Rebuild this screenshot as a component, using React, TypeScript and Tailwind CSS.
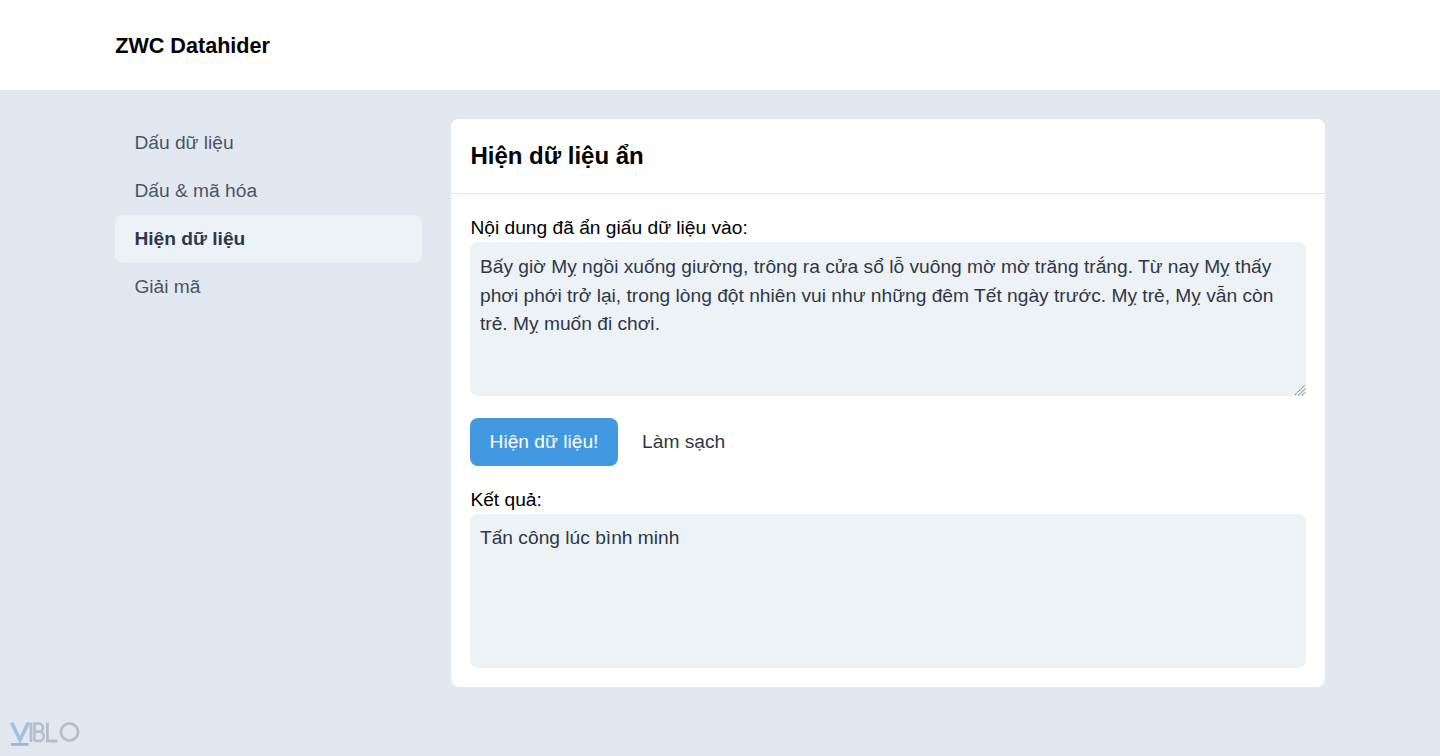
export default function App() {
  const nav = ["Dấu dữ liệu", "Dấu & mã hóa", "Hiện dữ liệu", "Giải mã"];
  const fieldBase =
    "block w-full h-[153.6px] rounded-[8px] bg-[#edf2f7] px-[9.6px] text-[19.2px] leading-[28.8px] text-[#2d3748] outline-none";
  const labelClass = "block h-[28.8px] pt-[1px]";
  return (
    <div className="relative h-[756px] overflow-hidden bg-[#e2e8f0] font-['Liberation_Sans',sans-serif] text-[19.2px] leading-[28.8px] text-black">
      <header className="h-[90px] bg-white">
        <div className="mx-auto flex h-full w-[1209.6px] items-center pt-[2px]">
          <h1 className="text-[21.6px] font-bold">ZWC Datahider</h1>
        </div>
      </header>
      <div className="mx-auto flex w-[1209.6px] items-start gap-[28.8px] pt-[28.8px]">
        <nav className="flex w-[307.2px] flex-col">
          {nav.map((n, i) => (
            <a
              key={n}
              className={
                i === 2
                  ? "h-[48px] rounded-[8px] bg-[#edf2f7] px-[19.2px] pt-[10.6px] font-bold text-[#2d3748]"
                  : "h-[48px] px-[19.2px] pt-[10.6px] text-[#4a5568]"
              }
            >
              {n}
            </a>
          ))}
        </nav>
        <main className="h-[568px] w-[873.6px] rounded-[8px] bg-white">
          <div className="flex h-[75.4px] items-center border-b border-[#e2e8f0] px-[19.2px]">
            <h2 className="text-[24px] font-bold">Hiện dữ liệu ẩn</h2>
          </div>
          <div className="px-[19.2px] pt-[19.2px]">
            <label className={labelClass}>Nội dung đã ẩn giấu dữ liệu vào:</label>
            <div className="relative">
              <textarea
                className={fieldBase + " resize-none pt-[10.6px] pb-[8.6px]"}
                readOnly
                defaultValue="Bấy giờ Mỵ ngồi xuống giường, trông ra cửa sổ lỗ vuông mờ mờ trăng trắng. Từ nay Mỵ thấy phơi phới trở lại, trong lòng đột nhiên vui như những đêm Tết ngày trước. Mỵ trẻ, Mỵ vẫn còn trẻ. Mỵ muốn đi chơi."
              />
              <svg className="absolute bottom-0 right-0" width="12" height="12" viewBox="0 0 12 12" fill="none">
                <path d="M1 11 L11 1 M4.5 11.5 L11.5 4.5 M8 11.5 L11.5 8" stroke="#7f858c" strokeWidth="1.1" strokeDasharray="1.4 0.6" />
                <path d="M2 11.5 L11.5 2 M5.5 11.5 L11.5 5.5" stroke="#ffffff" strokeWidth="0.6" opacity="0.6" />
              </svg>
            </div>
            <div className="mt-[22.2px] flex items-center">
              <button className="h-[48px] rounded-[8px] bg-[#4299e1] px-[19.2px] text-white">Hiện dữ liệu!</button>
              <button className="ml-[5.3px] h-[48px] px-[19.2px] text-[#2d3748]">Làm sạch</button>
            </div>
            <label className={"mt-[19.2px] " + labelClass}>Kết quả:</label>
            <div className={fieldBase + " py-[9.6px]"}>Tấn công lúc bình minh</div>
          </div>
        </main>
      </div>
      <svg className="absolute bottom-[8px] left-[10px]" width="72" height="26" viewBox="0 0 72 26" fill="none">
        <path d="M1.5 0.5 L10 18 L18.5 0.5" stroke="#a3bfe2" strokeWidth="3.6" />
        <rect x="1" y="21" width="17.5" height="2.8" fill="#94b6e0" />
        <rect x="19.6" y="0.5" width="2.8" height="19.5" fill="#b5bfcc" />
        <path d="M24.5 19V1.7h4.5c5.2 0 5.2 8 0 8h-4.5M29 9.7c6.4 0 6.4 9.3 0 9.3h-4.5" stroke="#b5bfcc" strokeWidth="2.7" />
        <path d="M37.4 0.5v18.5h10" stroke="#b5bfcc" strokeWidth="2.8" />
        <circle cx="59.5" cy="10" r="8.6" stroke="#b5bfcc" strokeWidth="2.8" />
      </svg>
    </div>
  );
}
